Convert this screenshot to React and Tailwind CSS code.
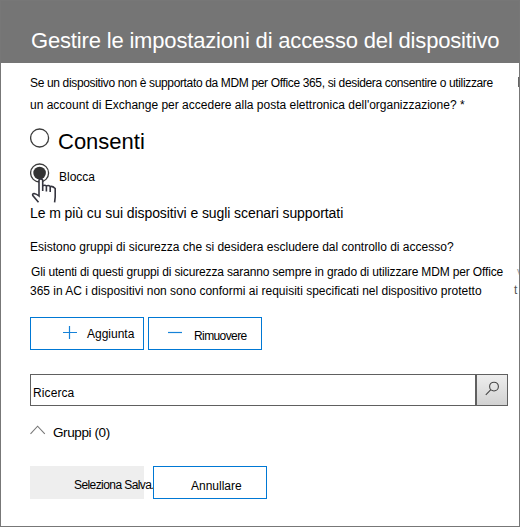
function Radio({ checked }) {
  return (
    <svg className="h-5 w-5 shrink-0" viewBox="0 0 20 20" fill="none">
      <circle cx="9.6" cy="10" r="9" stroke="#3c3c3c" strokeWidth="1.3" />
      {checked && <circle cx="9.6" cy="10" r="6.3" fill="#333" />}
    </svg>
  );
}

function HandCursor() {
  return (
    <svg className="absolute top-[14px] left-0 h-[27px] w-[28px]" viewBox="0 0 28 27" fill="none">
      <path d="M9 26 L2.8 18.6 Q2 16.6 4.2 16.5 Q6.5 16.9 9 19 V3 Q10.8 .8 12.7 3 V8.5 Q14.7 7.5 16.4 9 Q18.4 7.8 20.2 9.5 Q22.5 8.8 25.2 11.5 V20 L24 26 Z" fill="#fff" />
      <path d="M8.5 25.3 L2.8 18.6 Q2 16.6 4.2 16.5 Q6.5 16.9 9 19 V3 Q10.8 .8 12.7 3 V14 M12.7 9 Q14.7 7.5 16.4 9 V14.5 M16.4 9 Q18.4 7.8 20.2 9.5 V15 M20.2 9.5 Q22.5 8.8 25.2 11.5 V20 L24.6 25.3" stroke="#35353f" strokeWidth="1.6" />
    </svg>
  );
}

export default function App() {
  return (
    <div className="relative flex h-[527px] w-[520px] flex-col overflow-hidden border border-[#777] bg-white font-['Liberation_Sans',Arial,sans-serif] text-[12px] leading-5 whitespace-nowrap text-black">
      <header className="h-[62px] shrink-0 bg-[#757575] bg-[radial-gradient(#6c6c6c_0.5px,transparent_0.7px)] bg-[size:4px_4px] pt-[26px] pl-[30px]">
        <h1 className="text-[22px] leading-7 tracking-[-0.17px] text-white">
          Gestire le impostazioni di accesso del dispositivo
        </h1>
      </header>

      <main className="flex flex-col pl-[29px]">
        <div className="mt-[9px] leading-[22px]">
          <p className="tracking-[-0.35px]">
            Se un dispositivo non è supportato da MDM per Office 365, si desidera consentire o utilizzare
          </p>
          <p>un account di Exchange per accedere alla posta elettronica dell'organizzazione? *</p>
        </div>

        <div className="mt-[12px] flex h-7 gap-2">
          <Radio />
          <span className="text-[22px] leading-7">Consenti</span>
        </div>
        <div className="relative mt-[7px] flex h-[40px] gap-[9px]">
          <Radio checked />
          <span className="mt-1">Blocca</span>
          <HandCursor />
        </div>

        <p className="text-[14px] tracking-[-0.08px]">
          Le m più cu sui dispositivi e sugli scenari supportati
        </p>
        <p className="mt-[14px]">
          Esistono gruppi di sicurezza che si desidera escludere dal controllo di accesso?
        </p>
        <div className="mt-[6px] leading-[19px]">
          <p className="pl-px tracking-[-0.15px]">
            Gli utenti di questi gruppi di sicurezza saranno sempre in grado di utilizzare MDM per Office
          </p>
          <p>365 in AC i dispositivi non sono conformi ai requisiti specificati nel dispositivo protetto</p>
        </div>

        <div className="mt-[16px] flex gap-1">
          <button className="flex h-[33px] w-[114px] border border-[#0078d4] pl-[31px]">
            <svg className="mt-[7px] h-4 w-4" viewBox="0 0 16 16" stroke="#1682d8" strokeWidth="1.2">
              <path d="M1 7.5H15M7.5 1V14" />
            </svg>
            <span className="mt-[6px] ml-[9px]">Aggiunta</span>
          </button>
          <button className="flex h-[33px] w-[114px] border border-[#0078d4] pl-[18px]">
            <svg className="mt-[7px] h-4 w-4" viewBox="0 0 16 16" stroke="#1682d8" strokeWidth="1.2">
              <path d="M1 7.5H15" />
            </svg>
            <span className="mt-[8px] ml-[11px] tracking-[-0.6px]">Rimuovere</span>
          </button>
        </div>

        <div className="mt-[24px] flex h-8">
          <div className="w-[446px] border border-[#606060] pt-[8px] pl-[2px] tracking-[0.1px]">Ricerca</div>
          <button className="w-8 border border-[#606060] bg-linear-to-b from-[#eee] to-[#d2d2d2]">
            <svg className="mt-[-3px] ml-[8px] h-4 w-4" viewBox="0 0 16 16" fill="none" stroke="#444" strokeWidth="1.1">
              <circle cx="9" cy="5.6" r="4.4" />
              <path d="M5.9 8.7L.8 13.8" />
            </svg>
          </button>
        </div>

        <div className="mt-[17px] flex h-5">
          <svg className="mt-[2px] h-[10px] w-4" viewBox="0 0 16 10" fill="none" stroke="#777" strokeWidth="1.1">
            <path d="M.5 8.8L7.6 1.2L14.8 8.8" />
          </svg>
          <span className="ml-[7px] text-[13.5px] tracking-[-0.4px]">Gruppi (0)</span>
        </div>

        <div className="mt-[23px] flex gap-[9px]">
          <button className="flex h-[33px] w-[114px] bg-[#eee] pt-[9px] pl-[44px] tracking-[-0.58px]">
            Seleziona Salva.
          </button>
          <button className="flex h-[33px] w-[114px] border border-[#0078d4] pt-[9px] pl-[37px]">
            Annullare
          </button>
        </div>
      </main>

      {/* Slivers of the page that continues behind the right edge of the dialog */}
      <div className="absolute top-[76px] right-0 h-[10px] w-px bg-[#666]" />
      <span className="absolute top-[279px] left-[513px] text-[12px] text-[#555]">t</span>
      <span className="absolute top-[260px] left-[516px] text-[11px] text-[#999]">v</span>
    </div>
  );
}
